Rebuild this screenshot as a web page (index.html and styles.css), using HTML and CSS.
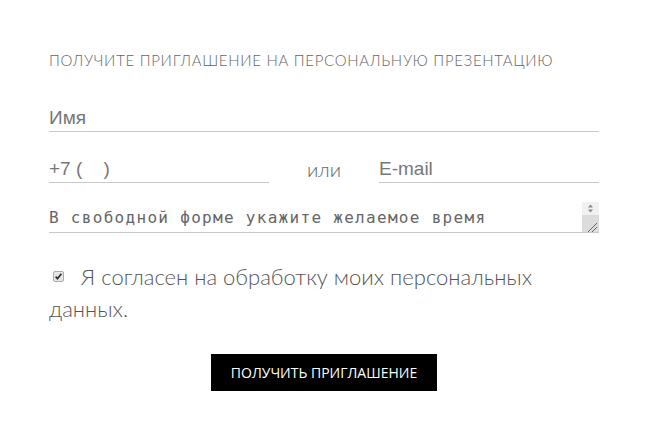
FILE: index.html
```html
<!DOCTYPE html>
<html lang="ru">
<head>
<meta charset="utf-8">
<link rel="stylesheet" href="styles.css">
</head>
<body>
<form class="form">
  <h2 class="title">ПОЛУЧИТЕ ПРИГЛАШЕНИЕ НА ПЕРСОНАЛЬНУЮ ПРЕЗЕНТАЦИЮ</h2>
  <div class="field field-name"><span class="ph">Имя</span></div>
  <div class="row">
    <div class="field field-phone"><span class="ph">+7 (&nbsp;&nbsp;&nbsp;&nbsp;)</span></div>
    <span class="or">или</span>
    <div class="field field-email"><span class="ph">E-mail</span></div>
  </div>
  <div class="field field-area">
    <span class="ph mono">В свободной форме укажите желаемое время</span>
    <span class="scroll">
      <span class="scroll-top"><svg width="7" height="9" viewBox="0 0 7 9"><path d="M3.5 0.5 L6 3.5 H1 Z M1 5.5 H6 L3.5 8.5 Z" fill="#888"/></svg></span>
      <span class="scroll-grip"><svg width="17" height="18" viewBox="0 0 17 18"><path d="M15 8 L6 17 M15 12 L10 17" stroke="#666" stroke-width="1"/></svg></span>
    </span>
  </div>
  <div class="agree">
    <span class="check"><svg width="11" height="11" viewBox="0 0 11 11"><rect x="0.5" y="0.5" width="10" height="10" rx="1.5" fill="#e6e6e6" stroke="#aaa"/><path d="M2.6 5.6 L4.5 7.6 L8.4 2.8" stroke="#333" stroke-width="1.7" fill="none"/></svg></span>
    <span class="agree-text">Я согласен на обработку моих персональных данных.</span>
  </div>
  <div class="actions"><button type="button" class="btn">ПОЛУЧИТЬ ПРИГЛАШЕНИЕ</button></div>
</form>
</body>
</html>
```
FILE: styles.css
```css
html, body { margin: 0; padding: 0; background: #fff; }
.form {
  width: 550px;
  padding: 51px 48px 0 49px;
  font-family: "Liberation Sans", Arial, sans-serif;
}
.title {
  margin: 0;
  font-family: Lato, "Open Sans", sans-serif;
  font-weight: 300;
  font-size: 15px;
  letter-spacing: 0.7px;
  line-height: 18px;
  color: #666;
}
.field {
  border-bottom: 1px solid #c8c8c8;
  height: 30px;
  display: flex;
  align-items: flex-end;
  box-sizing: border-box;
  padding-bottom: 2px;
}
.ph { color: #777; font-size: 19px; line-height: 22px; }
.field-name { margin-top: 33px; }
.row { display: flex; align-items: flex-end; margin-top: 21px; }
.field-phone { width: 220px; }
.or {
  width: 110px;
  text-align: center;
  font-family: Lato, sans-serif;
  font-weight: 300;
  font-size: 20px;
  color: #666;
  padding-bottom: 2px;
}
.field-email { flex: 1; }
.field-area { margin-top: 19px; position: relative; height: 31px; padding-bottom: 3px; }
.mono { font-family: "DejaVu Sans Mono", monospace; font-size: 16px; color: #666; letter-spacing: 1.3px; }
.scroll {
  position: absolute; right: 0; top: 0; width: 17px; height: 30px;
  display: flex; flex-direction: column;
}
.scroll-top {
  height: 13px; background: #f1f1f1;
  display: flex; align-items: center; justify-content: center;
}
.scroll-grip { height: 17px; background: #dcdcdc; display: flex; overflow: hidden; }
.agree { margin-top: 28px; display: flex; align-items: flex-start; }
.check { display: inline-flex; margin: 10px 0 0 4px; width: 11px; flex: none; }
.agree-text {
  margin-left: -15px;
  text-indent: 32px;
  font-family: Lato, sans-serif;
  font-weight: 300;
  font-size: 22px;
  line-height: 32px;
  color: #555;
}
.actions { display: flex; justify-content: center; margin-top: 29px; }
.btn {
  background: #000; color: #fff; border: 0;
  width: 226px; height: 37px;
  font-family: "Open Sans", sans-serif; font-size: 14px;
  padding: 0; cursor: pointer;
}
```
